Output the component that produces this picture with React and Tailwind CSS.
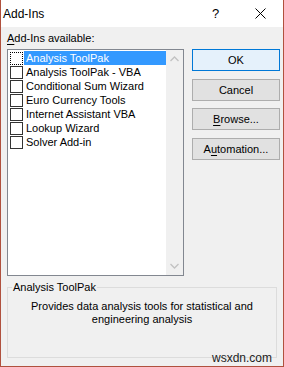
import React from "react";

const items = [
  "Analysis ToolPak",
  "Analysis ToolPak - VBA",
  "Conditional Sum Wizard",
  "Euro Currency Tools",
  "Internet Assistant VBA",
  "Lookup Wizard",
  "Solver Add-in",
];

function Btn({ children, primary, className = "" }) {
  return (
    <div
      className={
        "h-[22px] w-[88px] flex items-center justify-center text-[11px] text-[#000] border " +
        (primary ? "border-[#0078d7] bg-[#e5f1fb] " : "border-[#adadad] bg-[#e1e1e1] ") +
        className
      }
    >
      {children}
    </div>
  );
}

export default function App() {
  return (
    <div
      className="relative w-[284px] h-[367px] bg-[#f0f0f0] border-x border-b border-[#b0513e] text-[#000] overflow-hidden"
      style={{ fontFamily: '"Liberation Sans", Arial, sans-serif' }}
    >
      {/* Title bar */}
      <div className="h-[27px] bg-white flex items-center pl-[2px] relative">
        <span className="text-[12px] leading-none">Add-Ins</span>
        <span className="absolute left-[211px] top-[7px] text-[13px] leading-none">?</span>
        <svg className="absolute left-[254px] top-[8px]" width="11" height="11" viewBox="0 0 11 11">
          <path d="M0.5 0.5 L10.5 10.5 M10.5 0.5 L0.5 10.5" stroke="#000" strokeWidth="1" fill="none" />
        </svg>
      </div>

      <div className="pl-[6px] pr-[3px]">
        <div className="h-[14px] mt-[4px] mb-[4px] text-[11px] leading-[14px]">
          <span className="underline underline-offset-2">A</span>dd-Ins available:
        </div>
        <div className="flex">
          {/* Listbox */}
          <div className="w-[177px] h-[227px] border border-[#828790] bg-white flex">
            <div className="flex-1 pt-[1px]">
              {items.map((t, i) => (
                <div key={t} className="h-[14px] flex items-center pl-[2px]">
                  <div
                    className={
                      "w-[13px] h-[13px] bg-white " +
                      (i === 0 ? "border border-dotted border-[#000]" : "border border-[#333]")
                    }
                  />
                  <div
                    className={
                      "ml-[1px] flex-1 h-[14px] pl-[2px] text-[11px] leading-[14px] whitespace-nowrap " +
                      (i === 0 ? "bg-[#3399ff] text-white" : "")
                    }
                  >
                    {t}
                  </div>
                </div>
              ))}
            </div>
            <div className="w-[17px] bg-[#f0f0f0] flex flex-col justify-between items-center py-[6px]">
              <svg width="9" height="6" viewBox="0 0 9 6">
                <path d="M0.5 5 L4.5 1 L8.5 5" stroke="#c2c2c2" strokeWidth="1.3" fill="none" />
              </svg>
              <svg width="9" height="6" viewBox="0 0 9 6">
                <path d="M0.5 1 L4.5 5 L8.5 1" stroke="#c2c2c2" strokeWidth="1.3" fill="none" />
              </svg>
            </div>
          </div>
          {/* Buttons */}
          <div className="ml-[8px] flex flex-col">
            <Btn primary>OK</Btn>
            <Btn className="mt-[8px]">Cancel</Btn>
            <Btn className="mt-[7px]">
              <span>
                <span className="underline underline-offset-2">B</span>rowse...
              </span>
            </Btn>
            <Btn className="mt-[8px]">
              <span>
                A<span className="underline underline-offset-2">u</span>tomation...
              </span>
            </Btn>
          </div>
        </div>

        {/* Group box */}
        <div className="relative mt-[11px] w-[270px] h-[71px] border border-[#dcdcdc]">
          <div className="absolute left-[4px] top-[-8px] px-[1px] bg-[#f0f0f0] text-[11px] leading-[14px]">
            Analysis ToolPak
          </div>
          <div className="pt-[12px] text-center text-[11px] leading-[13px]">
            Provides data analysis tools for statistical and
            <br />
            engineering analysis
          </div>
        </div>
      </div>

      <div className="absolute left-[211px] top-[351px] text-[12px] leading-[14px] text-[#222]">
        wsxdn.com
      </div>
    </div>
  );
}
